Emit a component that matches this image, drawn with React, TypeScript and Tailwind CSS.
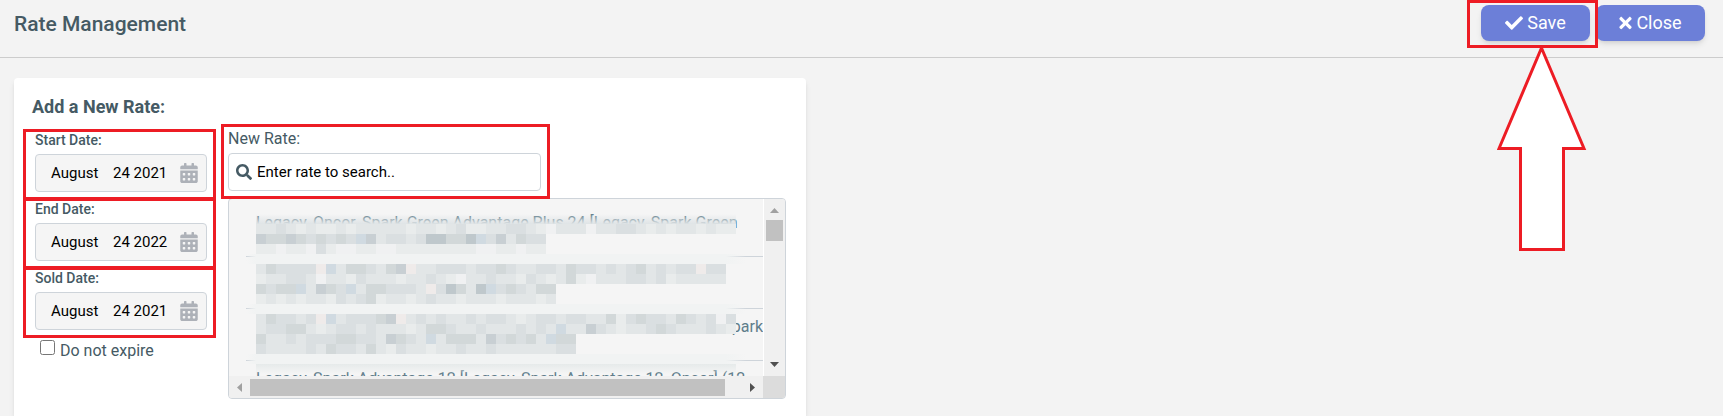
import { useState } from "react"
import { FaCalendarAlt, FaCheck, FaSearch, FaTimes } from "react-icons/fa"

const dates = [
  { id: "start", label: "Start Date:", month: "August", rest: "24 2021" },
  { id: "end", label: "End Date:", month: "August", rest: "24 2022" },
  { id: "sold", label: "Sold Date:", month: "August", rest: "24 2021" },
]

const rates = [
  { name: "Legacy, Oncor, Spark Green Advantage Plus 24 [Legacy, Spark Green", end: false },
  { name: "", end: false },
  { name: "Spark", end: true },
  { name: "Legacy, Spark Advantage 12 [Legacy, Spark Advantage 12, Oncor] (12", end: false },
]

// shades of the privacy mask, one letter per 10px block
const shades: Record<string, string> = {
  a: "#f0f1f2",
  b: "#e9ecec",
  c: "#e2e6e7",
  d: "#dadfe1",
  e: "#d2d8d9",
  f: "#c8cfd3",
  g: "#bfc8cc",
  i: "#d0dae1",
  p: "#efebea",
}

const mask = [
  "ccdcbcbbcbcccccbccbcdbbccddcbacccaccddcbcbccbcbb",
  "feefedededifcddcdggeegidfcedd",
  "bbabbadbaabbaabbbbbbbbaabbabb",
  "",
  "ceddddpiceedcefpccdddcddedccddceddcdcdecdcddpdd",
  "bccddcaccbdcccbccdcbaccdccbdcbcebacccddcdbccccc",
  "edeeicfediceedddcpdgecgidedcee",
  "bcbcbccbdcdebccbcdccbcccbcccbc",
  "",
  "ceddcdpicdddefpcdcdccdcddcbcddcddccebdeddcedcdad",
  "cddeecbcddcdcccbceedccdcccdcdciccfdcbccdedcccdcb",
  "eccdcdddeeddcfedciceeecfdedeciee",
  "dccccdceddcecbdccbccdccdccccccdd",
]

function MaskStrip() {
  return (
    <div className="h-[10px] w-[500px] bg-[linear-gradient(to_right,transparent,#f1f3f3_10px,#f1f3f3_480px,transparent)]"></div>
  )
}

function Mask() {
  return (
    <div className="pointer-events-none absolute left-[17px] top-[15px]">
      <div className="ml-[10px] h-[10px] w-[480px] bg-gradient-to-b from-transparent to-[#dfe4e6]"></div>
      {mask.map((line, i) =>
        line === "" ? (
          <MaskStrip key={i} />
        ) : (
          <div key={i} className="ml-[10px] flex">
            {line.split("").map((c, j) => (
              <span key={j} className="h-[10px] w-[10px]" style={{ background: shades[c] }}></span>
            ))}
          </div>
        )
      )}
      <MaskStrip />
      <div className="ml-[10px] h-[10px] w-[480px] bg-gradient-to-b from-[#e6eaea] to-transparent"></div>
    </div>
  )
}

function RateList() {
  return (
    <div className="h-[201px] w-[558px] overflow-hidden rounded border border-[#ced4da] bg-[#f5f5f5] text-[#607d8b]">
      <div className="flex">
        <div className="relative h-[177px] flex-1 overflow-hidden pl-[17px] pt-[6px]">
          <ul>
            {rates.map((r, i) => (
              <li
                key={i}
                className={
                  r.end
                    ? "h-[52px] border-b border-[#ced4da] pt-2 text-right text-base leading-5 whitespace-nowrap"
                    : "h-[52px] border-b border-[#ced4da] pl-[10px] pt-2 text-base leading-5 whitespace-nowrap"
                }
              >
                {r.name}
              </li>
            ))}
          </ul>
          <Mask />
        </div>
        <div className="flex w-[22px] flex-col items-center justify-between border-l border-white bg-[#f0f0f0] py-[9px]">
          <div className="flex flex-col items-center gap-[7px]">
            <svg width="9" height="5" viewBox="0 0 9 5"><path d="M0 5L4.5 0L9 5Z" fill="#a0a0a0" /></svg>
            <div className="h-[21px] w-[17px] bg-[#c1c1c1]"></div>
          </div>
          <svg width="9" height="5" viewBox="0 0 9 5"><path d="M0 0L4.5 5L9 0Z" fill="#505050" /></svg>
        </div>
      </div>
      <div className="flex h-[22px]">
        <div className="flex flex-1 items-center justify-between bg-[#f0f0f0] px-2">
          <div className="flex items-center gap-2">
            <svg width="5" height="9" viewBox="0 0 5 9"><path d="M5 0L0 4.5L5 9Z" fill="#a0a0a0" /></svg>
            <div className="h-[17px] w-[475px] bg-[#c1c1c1]"></div>
          </div>
          <svg width="5" height="9" viewBox="0 0 5 9"><path d="M0 0L5 4.5L0 9Z" fill="#505050" /></svg>
        </div>
        <div className="w-[22px] bg-[#dcdcdc]"></div>
      </div>
    </div>
  )
}

function App() {
  const [expire, setExpire] = useState(false)

  return (
    <div className="flex h-screen flex-col overflow-hidden bg-[#f3f3f3] font-['Roboto',sans-serif] text-[#455a64]">
      <header className="flex h-[58px] shrink-0 justify-between border-b border-[#cccccc] pl-[14px] pr-[18px]">
        <h1 className="pt-2 text-[21px] font-medium leading-8">Rate Management</h1>
        <div className="flex gap-[6px] pt-[5px]">
          <div className="relative">
            <button className="flex h-9 w-[109px] items-center justify-center gap-1 rounded-lg bg-[#6c7fd8] text-lg text-white shadow-md">
              <FaCheck /> Save
            </button>
            <div className="absolute -left-[14px] -top-[5px] z-10 h-[48px] w-[131px] border-3 border-[#ed1c24]"></div>
            <svg className="absolute left-4 top-[41px] z-10" width="90" height="205" viewBox="0 0 90 205">
              <path d="M44.5 2L87 102.500H66.500V203.500H23.500V102.500H2Z" fill="#fff" stroke="#ed1c24" strokeWidth="3" />
            </svg>
          </div>
          <button className="flex h-9 w-[109px] items-center justify-center gap-1 rounded-lg bg-[#6c7fd8] text-lg text-white shadow-md">
            <FaTimes className="w-[13px]" /> Close
          </button>
        </div>
      </header>

      <main className="flex-1 px-[14px] pt-5">
        <section className="h-full w-[792px] rounded-t bg-white px-[18px] pt-[17px] shadow-md">
          <h2 className="text-lg font-bold leading-6">Add a New Rate:</h2>
          <div className="flex pl-[3px]">
            <div className="w-[172px] pt-[13px]">
              {dates.map((d) => (
                <div key={d.id} className="relative h-[69px]">
                  <label htmlFor={d.id} className="block h-[22px] text-sm font-medium leading-4">{d.label}</label>
                  <button
                    id={d.id}
                    className="flex h-[38px] w-full items-center rounded border border-[#ced4da] bg-[#f5f5f5] pl-[15px] pr-[7px] text-[15px] text-black"
                  >
                    <span className="w-[62px] text-left">{d.month}</span>
                    <span>{d.rest}</span>
                    <FaCalendarAlt className="ml-auto text-xl text-[#adb1b8]" />
                  </button>
                  <div className="absolute -left-3 -top-[3px] h-[71px] w-[193px] border-3 border-[#ed1c24]"></div>
                </div>
              ))}
              <div className="flex items-start gap-[5px] pl-[5px] text-base">
                <input
                  id="expire"
                  type="checkbox"
                  checked={expire}
                  onChange={() => setExpire(!expire)}
                  className="mt-px h-[15px] w-[15px]"
                />
                <label htmlFor="expire">Do not expire</label>
              </div>
            </div>
            <div className="pl-[21px] pt-[10px]">
              <div className="relative h-[69px]">
                <label htmlFor="rate" className="block h-6 text-base leading-5">New Rate:</label>
                <div className="flex h-[38px] w-[313px] items-center gap-[5px] rounded border border-[#ced4da] pl-[7px]">
                  <FaSearch />
                  <input
                    id="rate"
                    placeholder="Enter rate to search.."
                    className="flex-1 pt-px text-[15px] outline-none placeholder:text-black"
                  />
                </div>
                <div className="absolute -left-[7px] -top-[5px] z-10 h-[75px] w-[329px] border-3 border-[#ed1c24]"></div>
              </div>
              <RateList />
            </div>
          </div>
        </section>
      </main>
    </div>
  )
}

export default App
